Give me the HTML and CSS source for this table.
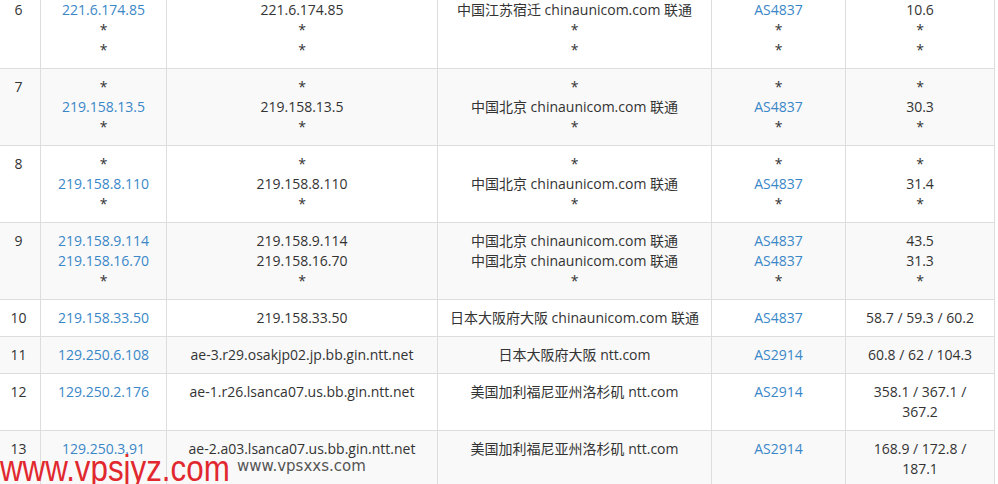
FILE: index.html
```html
<!DOCTYPE html>
<html lang="zh-CN">
<head>
  <meta charset="UTF-8">
  <meta name="viewport" content="width=device-width, initial-scale=1.0">
  <title>traceroute</title>
  <link rel="stylesheet" href="styles.css">
</head>
<body>

<table class="trace-table">
  <colgroup>
    <col class="col-hop">
    <col class="col-ip">
    <col class="col-host">
    <col class="col-loc">
    <col class="col-as">
    <col class="col-time">
  </colgroup>
  <tbody>
    <tr>
      <td>6</td>
      <td><a href="#">221.6.174.85</a><br>*<br>*</td>
      <td>221.6.174.85<br>*<br>*</td>
      <td>中国江苏宿迁 chinaunicom.com 联通<br>*<br>*</td>
      <td><a href="#">AS4837</a><br>*<br>*</td>
      <td>10.6<br>*<br>*</td>
    </tr>
    <tr>
      <td>7</td>
      <td>*<br><a href="#">219.158.13.5</a><br>*</td>
      <td>*<br>219.158.13.5<br>*</td>
      <td>*<br>中国北京 chinaunicom.com 联通<br>*</td>
      <td>*<br><a href="#">AS4837</a><br>*</td>
      <td>*<br>30.3<br>*</td>
    </tr>
    <tr>
      <td>8</td>
      <td>*<br><a href="#">219.158.8.110</a><br>*</td>
      <td>*<br>219.158.8.110<br>*</td>
      <td>*<br>中国北京 chinaunicom.com 联通<br>*</td>
      <td>*<br><a href="#">AS4837</a><br>*</td>
      <td>*<br>31.4<br>*</td>
    </tr>
    <tr>
      <td>9</td>
      <td><a href="#">219.158.9.114</a><br><a href="#">219.158.16.70</a><br>*</td>
      <td>219.158.9.114<br>219.158.16.70<br>*</td>
      <td>中国北京 chinaunicom.com 联通<br>中国北京 chinaunicom.com 联通<br>*</td>
      <td><a href="#">AS4837</a><br><a href="#">AS4837</a><br>*</td>
      <td>43.5<br>31.3<br>*</td>
    </tr>
    <tr>
      <td>10</td>
      <td><a href="#">219.158.33.50</a></td>
      <td>219.158.33.50</td>
      <td>日本大阪府大阪 chinaunicom.com 联通</td>
      <td><a href="#">AS4837</a></td>
      <td>58.7 / 59.3 / 60.2</td>
    </tr>
    <tr>
      <td>11</td>
      <td><a href="#">129.250.6.108</a></td>
      <td>ae-3.r29.osakjp02.jp.bb.gin.ntt.net</td>
      <td>日本大阪府大阪 ntt.com</td>
      <td><a href="#">AS2914</a></td>
      <td>60.8 / 62 / 104.3</td>
    </tr>
    <tr>
      <td>12</td>
      <td><a href="#">129.250.2.176</a></td>
      <td>ae-1.r26.lsanca07.us.bb.gin.ntt.net</td>
      <td>美国加利福尼亚州洛杉矶 ntt.com</td>
      <td><a href="#">AS2914</a></td>
      <td>358.1 / 367.1 / 367.2</td>
    </tr>
    <tr>
      <td>13</td>
      <td><a href="#">129.250.3.91</a></td>
      <td>ae-2.a03.lsanca07.us.bb.gin.ntt.net</td>
      <td>美国加利福尼亚州洛杉矶 ntt.com</td>
      <td><a href="#">AS2914</a></td>
      <td>168.9 / 172.8 / 187.1</td>
    </tr>
  </tbody>
</table>

<div class="mark mark-red">www.vpsjyz.com</div>
<div class="mark mark-grey">www.vpsxxs.com</div>

</body>
</html>
```

FILE: styles.css
```css
html, body {
  margin: 0;
  padding: 0;
  background-color: #fff;
  overflow: hidden;
}

body {
  font-family: "Open Sans", "Noto Sans CJK SC", sans-serif;
  font-size: 14px;
  color: #333;
  position: relative;
  height: 484px;
}

.trace-table {
  border-collapse: collapse;
  table-layout: fixed;
  width: 998px;
  margin: -9px 0 0 -4px;
}

.col-hop { width: 44px; }
.col-ip { width: 126px; }
.col-host { width: 271px; }
.col-loc { width: 274px; }
.col-as { width: 134px; }
.col-time { width: 149px; }

.trace-table td {
  border: 1px solid #ddd;
  padding: 8px 10px;
  line-height: 20px;
  text-align: center;
  vertical-align: top;
}

.trace-table tr:nth-child(even) {
  background-color: #f9f9f9;
}

.trace-table a {
  color: #3a87c8;
  text-decoration: none;
}

.mark {
  position: absolute;
  line-height: 1;
  white-space: nowrap;
}

.mark-red {
  left: 0;
  top: 451px;
  font-family: "Liberation Sans", Arial, sans-serif;
  font-size: 36px;
  color: #e2282f;
  transform: scaleX(0.87);
  transform-origin: left top;
}

.mark-grey {
  left: 237px;
  top: 459px;
  font-family: "DejaVu Sans", sans-serif;
  font-size: 15px;
  color: #555;
}
```
